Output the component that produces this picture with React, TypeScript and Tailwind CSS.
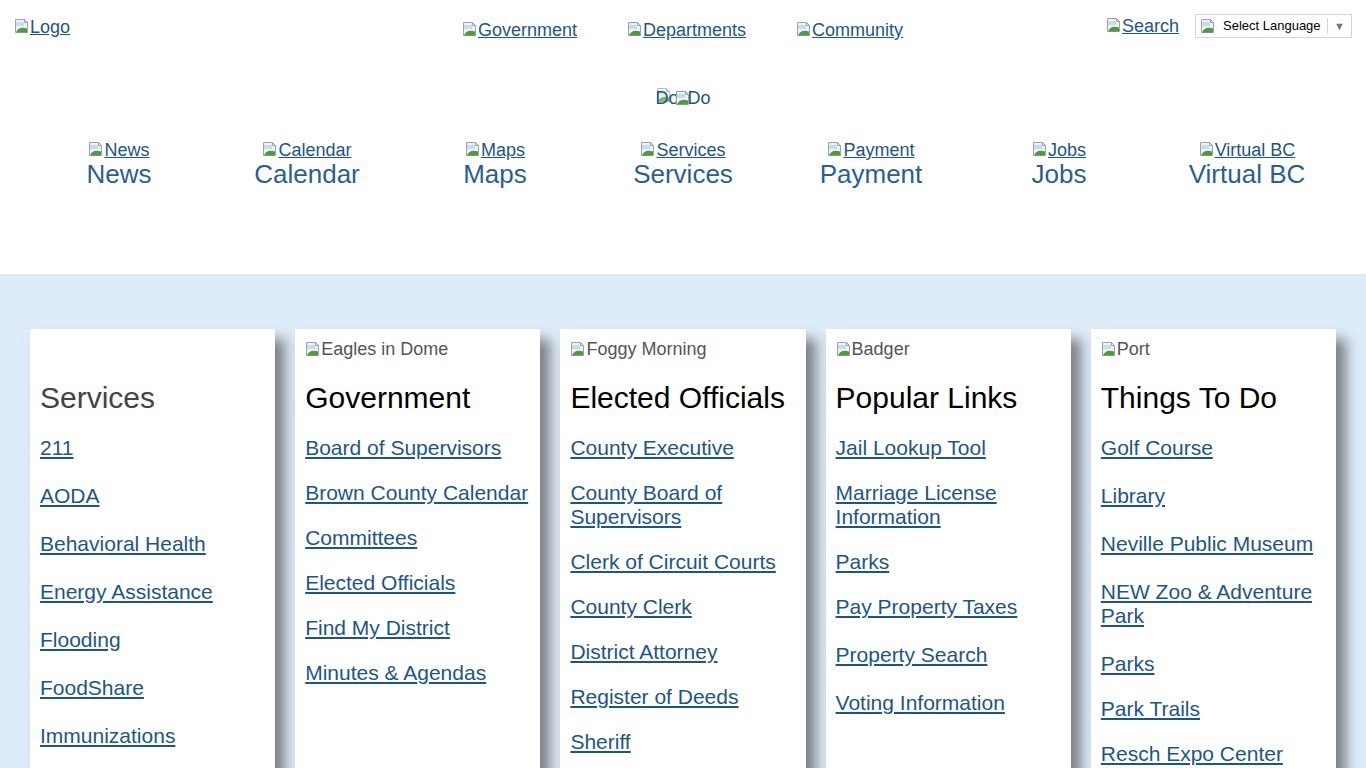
import React from 'react';

const Broken = ({ className = '' }: { className?: string }) => (
  <svg width="16" height="16" viewBox="0 0 16 16" className={`inline-block shrink-0 ${className}`}>
    <path d="M1.5 1.5h9l3 3v10h-12z" fill="#eef2f6" stroke="#9aa2ab" />
    <path d="M10.5 1.5v3h3" fill="none" stroke="#9aa2ab" />
    <path d="M2 4h8v4H2z" fill="#c9dcef" />
    <path d="M2 14.5C3.5 10 8 8.5 13 10.5v4z" fill="#4e9a3c" />
  </svg>
);

const ImgLink = ({ label, className = '' }: { label: string; className?: string }) => (
  <a href="#" className={`inline-flex items-end text-[#1c5689] underline ${className}`}>
    <Broken className="mb-[3px]" />
    <span>{label}</span>
  </a>
);

const topNav = ['Government', 'Departments', 'Community'];
const quick = ['News', 'Calendar', 'Maps', 'Services', 'Payment', 'Jobs', 'Virtual BC'];

type Item = { t: string; wide?: boolean };

const cards: { img?: string; title: string; grey?: boolean; items: Item[] }[] = [
  {
    title: 'Services',
    grey: true,
    items: [
      { t: '211' },
      { t: 'AODA', wide: true },
      { t: 'Behavioral Health', wide: true },
      { t: 'Energy Assistance', wide: true },
      { t: 'Flooding', wide: true },
      { t: 'FoodShare', wide: true },
      { t: 'Immunizations', wide: true },
    ],
  },
  {
    img: 'Eagles in Dome',
    title: 'Government',
    items: [
      { t: 'Board of Supervisors' },
      { t: 'Brown County Calendar' },
      { t: 'Committees' },
      { t: 'Elected Officials' },
      { t: 'Find My District' },
      { t: 'Minutes & Agendas' },
    ],
  },
  {
    img: 'Foggy Morning',
    title: 'Elected Officials',
    items: [
      { t: 'County Executive' },
      { t: 'County Board of Supervisors' },
      { t: 'Clerk of Circuit Courts' },
      { t: 'County Clerk' },
      { t: 'District Attorney' },
      { t: 'Register of Deeds' },
      { t: 'Sheriff' },
    ],
  },
  {
    img: 'Badger',
    title: 'Popular Links',
    items: [
      { t: 'Jail Lookup Tool' },
      { t: 'Marriage License Information' },
      { t: 'Parks' },
      { t: 'Pay Property Taxes' },
      { t: 'Property Search', wide: true },
      { t: 'Voting Information', wide: true },
    ],
  },
  {
    img: 'Port',
    title: 'Things To Do',
    items: [
      { t: 'Golf Course' },
      { t: 'Library', wide: true },
      { t: 'Neville Public Museum', wide: true },
      { t: 'NEW Zoo & Adventure Park', wide: true },
      { t: 'Parks', wide: true },
      { t: 'Park Trails' },
      { t: 'Resch Expo Center' },
    ],
  },
];

export default function App() {
  return (
    <div className="min-h-[768px] bg-white font-['Liberation_Sans',Arial,sans-serif]">
      {/* header */}
      <header className="flex h-[50px] items-start">
        <div className="w-[462px] pl-[14px] pt-[17px] text-[18px] leading-[20px]">
          <ImgLink label="Logo" />
        </div>
        <nav className="flex gap-[50px] pt-[20px] text-[18px] leading-[20px]">
          {topNav.map((n) => (
            <ImgLink key={n} label={n} />
          ))}
        </nav>
        <div className="ml-auto flex items-start gap-[16px] pr-[14px]">
          <div className="pt-[16px] text-[18px] leading-[20px]">
            <ImgLink label="Search" />
          </div>
          <div className="mt-[14px] flex h-[24px] w-[157px] items-center border border-[#d5d5d5] bg-white pl-[4px] text-[13px] text-black">
            <Broken />
            <span className="ml-[7px]">Select Language</span>
            <span className="ml-auto flex h-[16px] items-center border-l border-[#d5d5d5] px-[6px] text-[11px] text-[#777]">▼</span>
          </div>
        </div>
      </header>

      {/* do do */}
      <div className="mt-[38px] flex justify-center text-[18px] leading-[20px] text-[#1c5689]">
        <span className="relative inline-flex items-end">
          <Broken className="absolute left-[1px] -top-[1px] opacity-70" />
          <span className="relative">Do</span>
          <Broken className="relative -ml-[4px] mb-[2px]" />
          <span className="-ml-[3px]">Do</span>
        </span>
      </div>

      {/* quick links */}
      <div className="mx-[25px] mt-[32px] grid grid-cols-7">
        {quick.map((q) => (
          <div key={q} className="flex flex-col items-center">
            <ImgLink label={q} className="text-[18px] leading-[20px]" />
            <a href="#" className="text-[26px] leading-[28px] text-[#2a5f8f]">
              {q}
            </a>
          </div>
        ))}
      </div>

      {/* cards */}
      <section className="mt-[86px] bg-[#deebf9] px-[30px] pt-[55px] pb-[40px]">
        <div className="grid grid-cols-5 gap-[20px]">
          {cards.map((c) => (
            <div key={c.title} className="h-[520px] bg-white px-[10px] pt-[10px] shadow-[10px_10px_12px_#7d8186]">
              <div className="flex h-[20px] items-end text-[18px] leading-[20px] text-[#555]">
                {c.img && (
                  <>
                    <Broken className="mb-[2px]" />
                    <span>{c.img}</span>
                  </>
                )}
              </div>
              <h2 className={`mt-[21px] text-[30px] leading-[36px] font-normal ${c.grey ? 'text-[#444]' : 'text-black'}`}>
                {c.title}
              </h2>
              <ul className="mt-[20px] text-[21px] leading-[24px]">
                {c.items.map((it, i) => (
                  <li key={it.t} className={i === 0 ? '' : it.wide ? 'mt-[24px]' : 'mt-[21px]'}>
                    <a href="#" className="text-[#1c5689] underline">
                      {it.t}
                    </a>
                  </li>
                ))}
              </ul>
            </div>
          ))}
        </div>
      </section>
    </div>
  );
}
